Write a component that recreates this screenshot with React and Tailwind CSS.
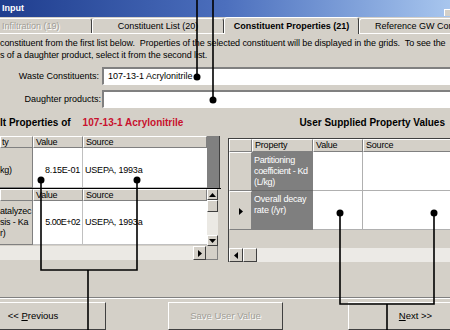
import React from "react";

function Tri({ dir }) {
  const v = dir === "up" || dir === "down";
  const w = v ? 7 : 4;
  const h = v ? 4 : 7;
  const pts = {
    up: "0,4 3.5,0 7,4",
    down: "0,0 7,0 3.5,4",
    right: "0,0 4,3.5 0,7",
    left: "4,0 0,3.5 4,7",
  }[dir];
  return (
    <svg width={w} height={h} viewBox={`0 0 ${w} ${h}`}>
      <polygon points={pts} fill="#000" />
    </svg>
  );
}

const raised =
  "bg-[#d4d0c8] border border-t-white border-l-white border-r-[#404040] border-b-[#404040]";
const hdr =
  "bg-[#d4d0c8] border-l border-t border-l-white border-t-white border-r border-b border-r-[#808080] border-b-[#808080]";
const disabledText = "text-[#a19e97] [text-shadow:1px_1px_0_#ffffff]";

function Tab({ className, children, selected }) {
  return (
    <div
      className={`shrink-0 flex items-center bg-[#d4d0c8] border-t border-l border-white border-r border-r-[#404040] rounded-t-[3px] whitespace-nowrap ${
        selected ? "h-[17px] font-bold relative z-10 -mb-px" : "h-[15px]"
      } ${className}`}
    >
      {children}
    </div>
  );
}

export default function App() {
  return (
    <div className="relative w-[450px] h-[330px] overflow-hidden bg-[#d4d0c8] font-['Liberation_Sans',Arial,sans-serif] text-[9px] text-black leading-none flex flex-col">
      {/* title bar */}
      <div className="h-[17px] shrink-0 flex items-center justify-between pl-[2px] bg-gradient-to-r from-[#1f3d8e] via-[#4c6fbd] to-[#a8c6ee]">
        <span className="text-white font-bold">Input</span>
        <div className="w-[6px] h-[7px] mt-[8px] bg-[#d4d0c8] border-t border-l border-white"></div>
      </div>

      {/* tabs */}
      <div className="h-[17px] shrink-0 flex items-end border-b border-white">
        <Tab className={`w-[131px] -ml-[39px] justify-start pl-[40px] ${disabledText}`}>Infiltration (19)</Tab>
        <Tab className="w-[132px] justify-center">Constituent List (20)</Tab>
        <Tab selected className="w-[135px] justify-center">Constituent Properties (21)</Tab>
        <Tab className="w-[131px] pl-[15px]">Reference GW Conc. (22)</Tab>
      </div>

      {/* instructions */}
      <div className="pt-[3px] leading-[12px] whitespace-pre shrink-0 tracking-[-0.07px]">
        <div>constituent from the first list below.  Properties of the selected constituent will be displayed in the grids.  To see the</div>
        <div>s of a daughter product, select it from the second list.</div>
      </div>

      {/* form rows */}
      <div className="mt-[6px] h-[18px] flex items-center shrink-0">
        <div className="w-[102px] shrink-0 pr-[3px] text-right whitespace-nowrap">Waste Constituents:</div>
        <div className="w-[360px] shrink-0 h-full bg-white border-t-2 border-l-2 border-[#808080] border-b border-b-white flex items-center pl-[4px]">
          107-13-1 Acrylonitrile
        </div>
      </div>
      <div className="mt-[5px] h-[18px] flex items-center shrink-0">
        <div className="w-[102px] shrink-0 pr-[1px] text-right whitespace-nowrap">Daughter products:</div>
        <div className="w-[360px] shrink-0 h-full bg-white border-t-2 border-l-2 border-[#808080] border-b border-b-white"></div>
      </div>

      {/* section headers */}
      <div className="mt-[8px] h-[14px] flex items-center justify-between font-bold text-[10px] shrink-0 pr-[5px]">
        <div className="flex">
          <span>lt Properties of</span>
          <span className="ml-[12px] text-[#c8102e]">107-13-1 Acrylonitrile</span>
        </div>
        <span>User Supplied Property Values</span>
      </div>

      {/* grids */}
      <div className="mt-[6px] h-[126px] flex items-start shrink-0 tracking-[-0.2px]">
        {/* left side */}
        <div className="w-[221px] shrink-0 flex flex-col">
          {/* grid A */}
          <div className="h-[52px] flex">
            <div className="w-[207px] flex flex-col">
              <div className="h-[12px] flex">
                <div className={`w-[33px] ${hdr} flex items-center pl-[1px]`}>ty</div>
                <div className={`w-[50px] ${hdr} flex items-center pl-[2px]`}>Value</div>
                <div className={`w-[124px] ${hdr} flex items-center pl-[2px]`}>Source</div>
              </div>
              <div className="flex-1 flex">
                <div className="w-[33px] bg-[#d4d0c8] border-r border-b border-[#808080] flex items-center pt-[5px]">kg)</div>
                <div className="w-[50px] bg-white border-r border-b border-[#c0c0c0] flex items-center justify-end pr-[2px] pt-[5px]">8.15E-01</div>
                <div className="w-[124px] bg-white border-b border-[#c0c0c0] flex items-center pl-[2px] pt-[5px]">USEPA, 1993a</div>
              </div>
            </div>
            <div className="w-[13px] bg-[#808080] border-r border-[#404040]"></div>
          </div>
          {/* grid B */}
          <div className="h-[72px] border-t border-black flex flex-col">
            <div className="h-[57px] flex">
              <div className="w-[207px] flex flex-col">
                <div className="h-[12px] flex">
                  <div className={`w-[33px] ${hdr}`}></div>
                  <div className={`w-[50px] ${hdr} flex items-center pl-[2px]`}>Value</div>
                  <div className={`w-[124px] ${hdr} flex items-center pl-[2px]`}>Source</div>
                </div>
                <div className="h-[44px] flex">
                  <div className="w-[33px] bg-[#d4d0c8] border-r border-b border-[#808080] leading-[11px] pt-[5px] overflow-hidden whitespace-nowrap">
                    <div>atalyzec</div>
                    <div>sis - Ka</div>
                    <div>r)</div>
                  </div>
                  <div className="w-[50px] bg-white border-r border-b border-[#c0c0c0] flex items-center justify-end pr-[2px] tracking-[-0.5px]">5.00E+02</div>
                  <div className="w-[124px] bg-white border-b border-[#c0c0c0] flex items-center pl-[2px]">USEPA, 1993a</div>
                </div>
              </div>
              <div className="w-[11px] flex flex-col bg-[#ebe9e4]">
                <div className={`h-[11px] ${raised} flex items-center justify-center`}><Tri dir="up" /></div>
                <div className={`h-[12px] ${raised}`}></div>
                <div className="flex-1"></div>
                <div className={`h-[11px] ${raised} flex items-center justify-center`}><Tri dir="down" /></div>
              </div>
            </div>
            <div className="flex-1 flex">
              <div className="w-[193px] bg-[#ebe9e4]"></div>
              <div className={`w-[13px] ${raised} flex items-center justify-center`}><Tri dir="right" /></div>
              <div className="w-[12px] bg-[#d4d0c8] border-r border-b border-[#808080]"></div>
            </div>
          </div>
        </div>

        {/* right grid */}
        <div className="ml-[7px] mt-[2px] w-[230px] h-[124px] border-l border-[#404040] flex flex-col shrink-0">
          <div className="h-[14px] flex border-t border-[#404040]">
            <div className={`w-[23px] ${hdr}`}></div>
            <div className={`w-[61px] ${hdr} flex items-center pl-[2px]`}>Property</div>
            <div className={`w-[50px] ${hdr} flex items-center pl-[2px]`}>Value</div>
            <div className={`flex-1 ${hdr} flex items-center pl-[2px]`}>Source</div>
          </div>
          <div className="h-[39px] flex">
            <div className={`w-[23px] ${hdr}`}></div>
            <div className="w-[61px] bg-[#7f7f7f] text-white leading-[11px] pt-[3px] pl-[2px] border-b border-[#6a6a6a] whitespace-nowrap tracking-[-0.35px]">
              <div>Partitioning</div>
              <div>coefficient - Kd</div>
              <div>(L/kg)</div>
            </div>
            <div className="w-[50px] bg-white border-r border-b border-[#b0b0b0]"></div>
            <div className="flex-1 bg-white border-b border-[#b0b0b0]"></div>
          </div>
          <div className="h-[39px] flex">
            <div className={`w-[23px] ${hdr} flex items-center justify-center pt-[2px]`}><Tri dir="right" /></div>
            <div className="w-[61px] bg-[#7f7f7f] text-white leading-[11px] pt-[3px] pl-[2px] whitespace-nowrap">
              <div>Overall decay</div>
              <div>rate (/yr)</div>
            </div>
            <div className="w-[50px] bg-white border-r border-b border-[#b0b0b0]"></div>
            <div className="flex-1 bg-white border-b border-[#b0b0b0]"></div>
          </div>
          <div className="h-[18px]"></div>
          <div className="h-[14px] flex">
            <div className={`w-[14px] ${raised} flex items-center justify-center`}><Tri dir="left" /></div>
            <div className={`w-[14px] ${raised}`}></div>
            <div className="flex-1 bg-[#eceae6]"></div>
          </div>
        </div>
      </div>

      {/* separator */}
      <div className="mt-[35px] h-[2px] border-t border-[#808080] border-b border-b-white shrink-0"></div>

      {/* buttons */}
      <div className="mt-[3px] h-[28px] flex shrink-0">
        <div className={`-ml-[40px] w-[146px] shrink-0 h-full ${raised} flex items-center justify-center text-[9.5px]`}>
          <span>&lt;&lt; <span className="underline">P</span>revious</span>
        </div>
        <div className={`ml-[62px] w-[115px] shrink-0 h-full ${raised} flex items-center justify-center text-[9.5px] ${disabledText}`}>
          Save User Value
        </div>
        <div className={`ml-[65px] w-[135px] shrink-0 h-full ${raised} flex items-center justify-center text-[9.5px]`}>
          <span><span className="underline">N</span>ext &gt;&gt;</span>
        </div>
      </div>

      {/* callout overlay */}
      <svg className="absolute inset-0 pointer-events-none" width="450" height="330" viewBox="0 0 450 330">
        <g stroke="#000" strokeWidth="1.6" fill="none">
          <line x1="197" y1="0" x2="197" y2="77" />
          <line x1="213" y1="0" x2="213" y2="100" />
          <polyline points="41,180 41,270 137,270 137,180" />
          <line x1="88" y1="270" x2="88" y2="330" />
          <polyline points="340,213 340,304 434,304 434,213" />
          <line x1="387" y1="304" x2="387" y2="330" />
        </g>
        <g fill="#000">
          <circle cx="197" cy="77" r="3.5" />
          <circle cx="213" cy="100" r="3.5" />
          <circle cx="41" cy="180" r="3.5" />
          <circle cx="137" cy="180" r="3.5" />
          <circle cx="340" cy="213" r="3.5" />
          <circle cx="434" cy="213" r="3.5" />
        </g>
      </svg>
    </div>
  );
}
